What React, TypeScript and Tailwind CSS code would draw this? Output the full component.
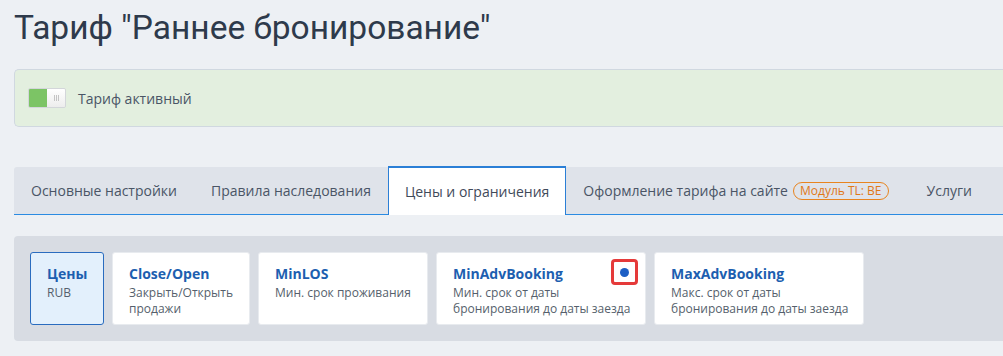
import { useState } from "react";

type Rule = {
  id: string;
  title: string;
  sub: string;
  width: string;
  marked?: boolean;
};

const rules: Rule[] = [
  { id: "prices", title: "Цены", sub: "RUB", width: "w-[74px]" },
  { id: "close", title: "Close/Open", sub: "Закрыть/Открыть продажи", width: "w-[138px]" },
  { id: "minlos", title: "MinLOS", sub: "Мин. срок проживания", width: "w-[170px]" },
  {
    id: "minadv",
    title: "MinAdvBooking",
    sub: "Мин. срок от даты бронирования до даты заезда",
    width: "w-[210px]",
    marked: true,
  },
  {
    id: "maxadv",
    title: "MaxAdvBooking",
    sub: "Макс. срок от даты бронирования до даты заезда",
    width: "w-[210px]",
  },
];

const tabs = [
  "Основные настройки",
  "Правила наследования",
  "Цены и ограничения",
  "Оформление тарифа на сайте",
  "Услуги",
];

const App = () => {
  const [activeTab, setActiveTab] = useState(2);
  const [activeRule, setActiveRule] = useState("prices");
  const [enabled, setEnabled] = useState(true);

  return (
    <div className="w-[1003px] h-[356px] overflow-hidden bg-[#edf0f4] font-['Open_Sans',sans-serif] pl-[14px]">
      <h1 className="pt-[7px] h-[69px] font-['Roboto',sans-serif] text-[33.5px] leading-[42px] text-[#2e3a4b] whitespace-nowrap">
        Тариф "Раннее бронирование"
      </h1>

      <div className="h-[58px] flex items-center gap-3 pl-[13px] bg-[#e3efdf] border border-[#d0d8e0] border-r-0 rounded-l-[5px]">
        <button
          onClick={() => setEnabled((v) => !v)}
          className="flex w-[38px] h-[20px] rounded-[2px] overflow-hidden border border-[#d3d6da]"
        >
          <span
            className={
              enabled
                ? "w-[19px] h-full bg-[#7cc465]"
                : "w-[19px] h-full bg-[#e6e6e6]"
            }
          />
          <span className="w-[19px] h-full bg-gradient-to-b from-white to-[#ededed] flex items-center justify-center gap-[1px]">
            <span className="w-px h-[6px] bg-[#c4c4c4]" />
            <span className="w-px h-[6px] bg-[#c4c4c4]" />
            <span className="w-px h-[6px] bg-[#c4c4c4]" />
          </span>
        </button>
        <span className="text-[14px] text-[#4a5566]">Тариф активный</span>
      </div>

      <div className="mt-[40px] h-[48px] flex items-stretch bg-[#dfe3ea] border-b border-[#2b8be2] rounded-tl-[3px]">
        {tabs.map((tab, i) => (
          <button
            key={tab}
            onClick={() => setActiveTab(i)}
            className={
              i === activeTab
                ? "-mt-px -mb-px px-[16px] flex items-center gap-1 bg-white border-x border-t-2 border-[#2b7fd6] border-b-0 text-[14px] text-[#3f4a5a] whitespace-nowrap"
                : "px-[17px] flex items-center gap-1 text-[14px] text-[#4a5566] whitespace-nowrap"
            }
          >
            {tab}
            {i === 3 && (
              <span className="ml-[1px] mr-[4px] px-[6px] h-[18px] flex items-center rounded-full border border-[#e8841f] text-[12px] font-normal text-[#e07818]">
                Модуль TL: BE
              </span>
            )}
          </button>
        ))}
      </div>

      <div className="mt-[21px] h-[105px] flex items-start gap-2 p-4 bg-[#d8dce3] rounded-l-[4px]">
        {rules.map((rule) => (
          <div
            key={rule.id}
            onClick={() => setActiveRule(rule.id)}
            className={
              (activeRule === rule.id
                ? "bg-[#e3f0fc] border-[#2a6cbf] "
                : "bg-white border-[#e8ebef] ") +
              rule.width +
              " relative h-[73px] flex flex-col items-start rounded-[3px] border text-left pl-4 pr-2 pt-[11px] cursor-pointer"
            }
          >
            <div className="text-[14px] font-bold leading-[20px] text-[#1d5fb0]">
              {rule.title}
            </div>
            <div className="mt-[1px] text-[12px] leading-[16px] text-[#555f6c]">
              {rule.sub}
            </div>
            {rule.marked && (
              <span className="absolute top-[6px] right-[7px] w-[27px] h-[26px] rounded-[4px] border-[3px] border-[#e53a3a] flex items-center justify-center">
                <span className="w-[9px] h-[9px] rounded-full bg-[#1d5fc4]" />
              </span>
            )}
          </div>
        ))}
      </div>
    </div>
  );
};

export default App;
